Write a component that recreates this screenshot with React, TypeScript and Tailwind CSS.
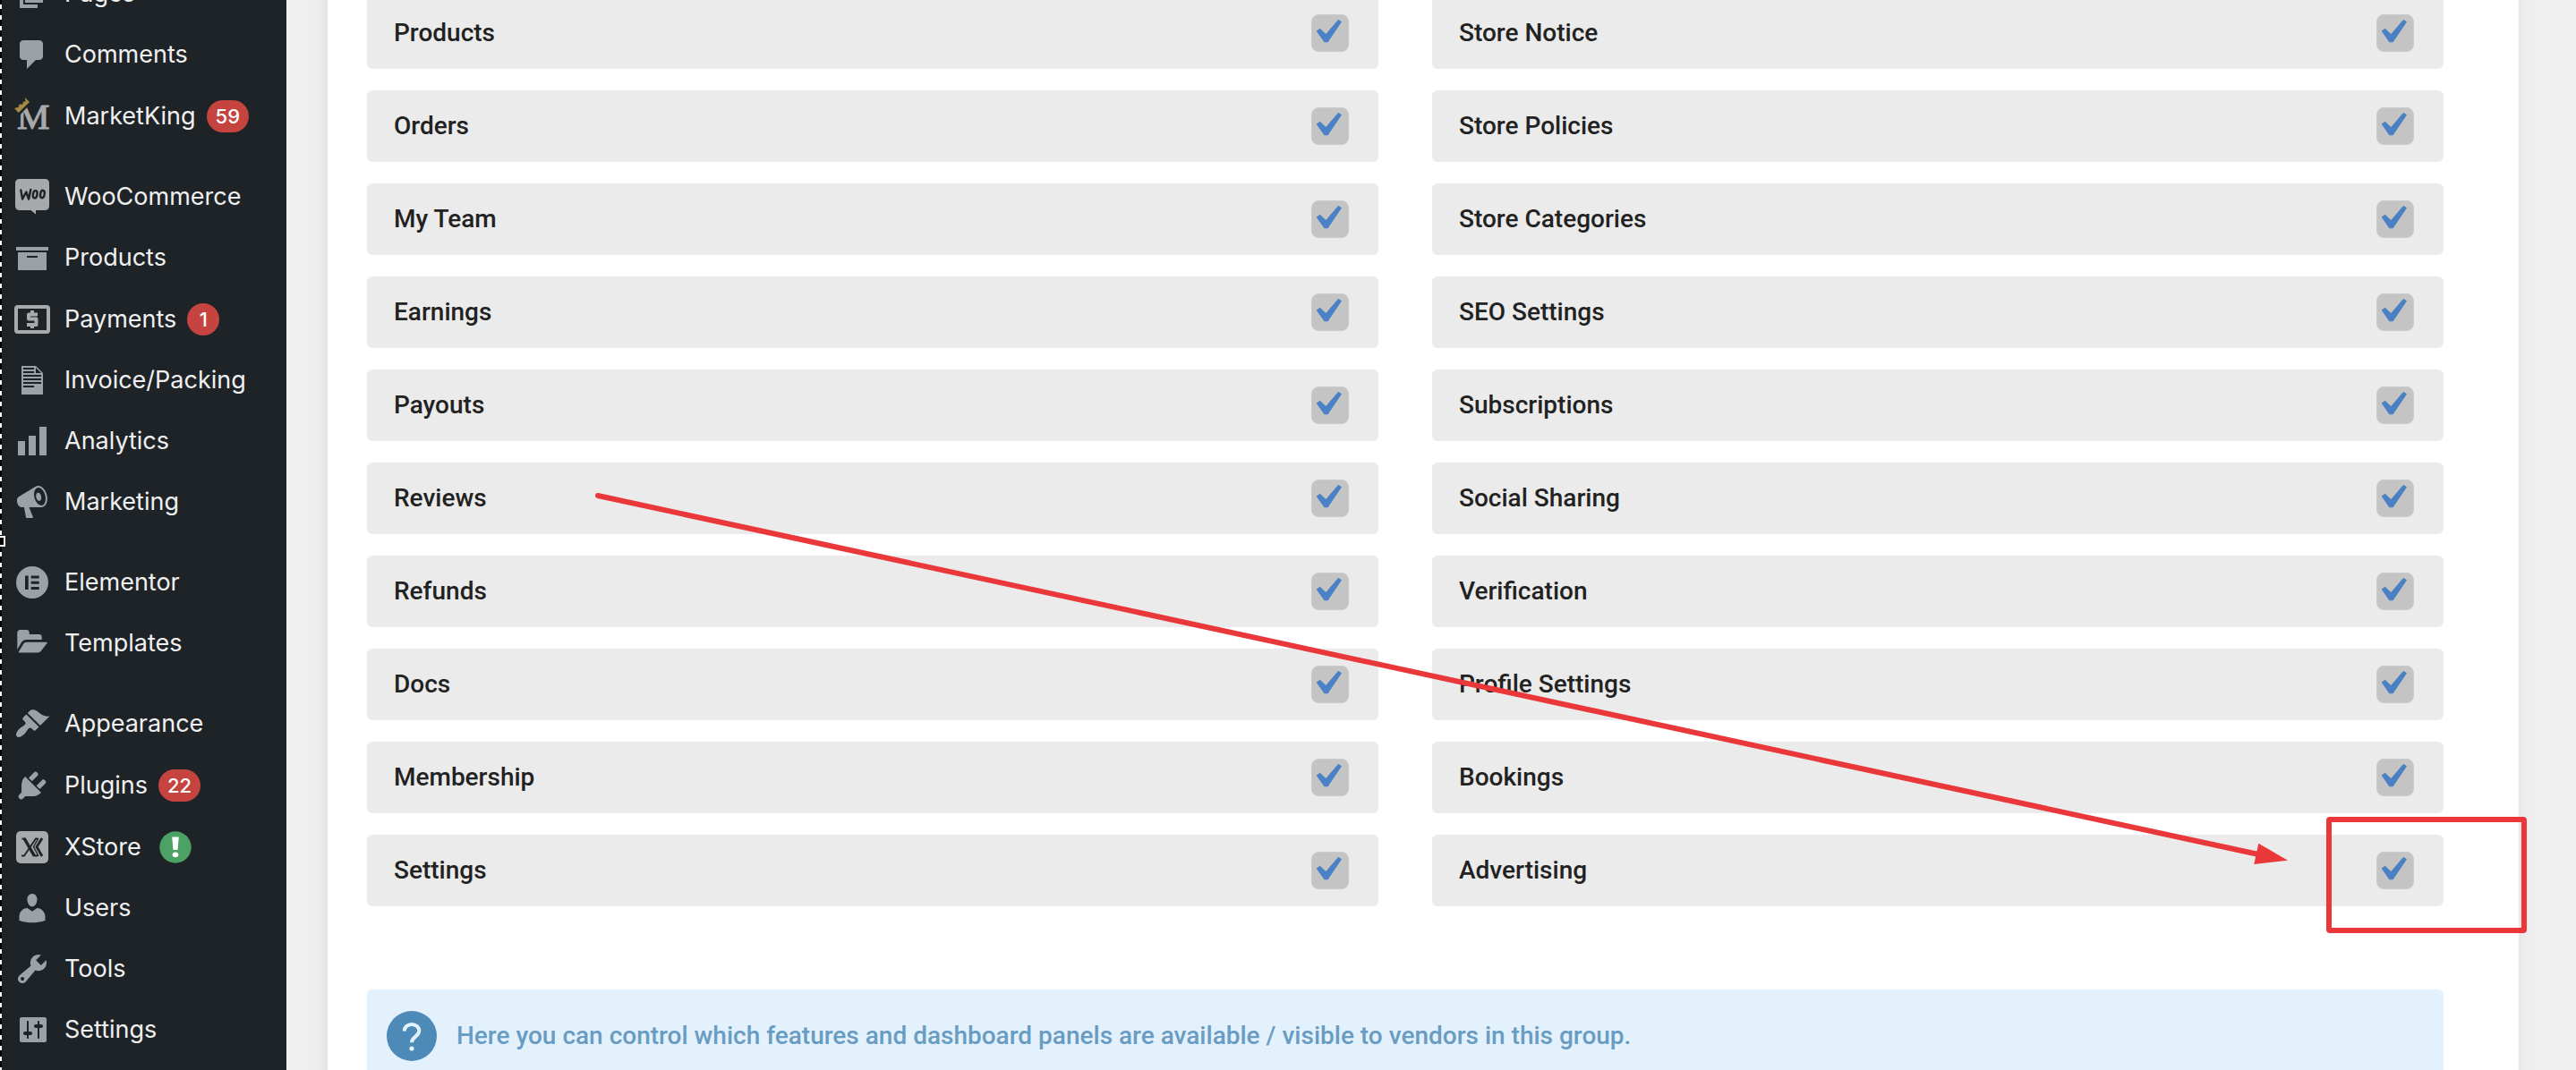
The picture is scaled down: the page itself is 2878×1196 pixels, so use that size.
import React, { useState } from "react";

interface MenuItem {
  label: string;
  icon: React.ReactNode;
  badge?: string;
  warning?: boolean;
}

// 20x20 glyphs, same grid as the admin menu icon font
const Dashicon = ({ d }: { d: string }) => (
  <svg viewBox="0 0 20 20" className="size-10 fill-[#9ca1a8]" aria-hidden="true">
    <path fillRule="evenodd" d={d} />
  </svg>
);

const MarketKingIcon = () => (
  <svg viewBox="0 0 40 40" className="size-10 overflow-visible" aria-hidden="true">
    <text x="3" y="34" fontSize="41" fontFamily="Liberation Serif, serif" fill="#a7aaad" stroke="#a7aaad" strokeWidth="1.2">
      M
    </text>
    <path d="M0 11L12-1l7 6L6 19z" fill="#1e2327" />
    <path d="M0 11l4.800-1.200.8-3.300 3.600.3 1-3.200 2.300.2L12-1l5 5L4.700 16z" fill="#a88b40" />
  </svg>
);

const WooIcon = () => (
  <svg viewBox="0 0 40 40" className="size-10" aria-hidden="true">
    <path d="M6 0h28q5 0 5 5v25q0 5-5 5H24v4.500L18.500 35H6q-5 0-5-5V5q0-5 5-5z" fill="#a7aaad" />
    <g fill="none" stroke="#1e2327" strokeWidth="2.400" strokeLinecap="round" strokeLinejoin="round">
      <path d="M7.300 12.500l1.800 10 4.200-8 2.800 8 2.200-10.500" />
      <ellipse cx="23.200" cy="17.300" rx="2.300" ry="4.200" transform="rotate(10 23.200 17.300)" />
      <ellipse cx="31.400" cy="17" rx="2.300" ry="4.200" transform="rotate(10 31.400 17)" />
    </g>
  </svg>
);

const PaymentsIcon = () => (
  <svg viewBox="0 0 40 40" className="size-10" fill="none" stroke="#a7aaad" aria-hidden="true">
    <rect x="2" y="6" width="36" height="28" rx="2" strokeWidth="4" />
    <path d="M26 14.500H16v5h8.500v6.500H14M20 10v4M20 26v4" strokeWidth="4" strokeLinejoin="round" />
  </svg>
);

const ElementorIcon = () => (
  <svg viewBox="0 0 40 40" className="size-10" aria-hidden="true">
    <circle cx="20" cy="20" r="18" fill="#9ca1a8" />
    <path d="M12 12.500h3.700V28H12zM18.700 12.500h9v3h-9zM18.700 18.700h9v3h-9zM18.700 25h9v3h-9z" fill="#1e2327" />
  </svg>
);

const TemplatesIcon = () => (
  <svg viewBox="0 0 40 40" className="size-10 fill-[#9ca1a8]" aria-hidden="true">
    <path d="M3.300 27V8.500Q3.300 5 6.800 5h6.700q3.200 0 3.200 3.200V10h10.800q3.200 0 3.200 3.200V16H13.500q-3 0-5 2.200z" />
    <path d="M13.500 18.700H36q1.400 0 .5 1.300l-6.500 8.500q-1.500 1.900-4 1.900H6q-2 0-.8-1.500l4.800-7.900q1.400-2.300 3.500-2.300z" />
  </svg>
);

const XStoreIcon = () => (
  <svg viewBox="0 0 40 40" className="size-10" aria-hidden="true">
    <rect x="2" y="2" width="36" height="36" rx="5" fill="#a7a9ab" />
    <g fill="none" stroke="#1e2327">
      <path d="M8.500 10.500h3l11.500 19h3" strokeWidth="2" />
      <path d="M11 10l11.500 20" strokeWidth="3.400" />
      <path d="M26 10.500h-2L11 29.500H8" strokeWidth="1.800" />
      <path d="M27 10l-5.500 9.500L27 30" strokeWidth="1.400" />
      <path d="M31 10l-6 9.500 6 10.500" strokeWidth="2.800" />
    </g>
  </svg>
);

const menuGroups: MenuItem[][] = [
  [
    { label: "Pages", icon: <Dashicon d="M6 15V2h10v13H6zm-1 1h8v2H3V5h2v11z" /> },
    {
      label: "Comments",
      icon: <Dashicon d="M5 2h9c1.100 0 2 .9 2 2v7c0 1.100-.9 2-2 2h-2l-5 5v-5H5c-1.100 0-2-.9-2-2V4c0-1.100.9-2 2-2z" />,
    },
    { label: "MarketKing", icon: <MarketKingIcon />, badge: "59" },
  ],
  [
    { label: "WooCommerce", icon: <WooIcon /> },
    { label: "Products", icon: <Dashicon d="M19 4v2H1V4h18zM2 7h16v10H2V7zm11 3V9H7v1h6z" /> },
    { label: "Payments", icon: <PaymentsIcon />, badge: "1" },
    {
      label: "Invoice/Packing",
      icon: <Dashicon d="M12 2l4 4v12H4V2h8zM5 3v1h6V3H5zm7 3h3l-3-3v3zM5 5v1h6V5H5zm10 3V7H5v1h10zM5 9v1h10V9H5zm10 3v-1H5v1h10zM5 13v1h6v-1H5z" />,
    },
    { label: "Analytics", icon: <Dashicon d="M18 18V2h-4v16h4zm-6 0V7H8v11h4zm-6 0v-8H2v8h4z" /> },
    {
      label: "Marketing",
      icon: (
        <Dashicon d="M18.150 5.940c.46 1.620.38 3.220-.02 4.480-.42 1.280-1.260 2.180-2.300 2.480-.16.06-.26.06-.4.06-.06.02-.12.02-.18.02-.06.02-.14.02-.22.02h-6.800l2.220 5.500c.02.14-.06.26-.14.34-.08.1-.24.16-.34.16H6.950c-.1 0-.26-.06-.34-.16-.08-.08-.16-.2-.14-.34l-1-5.500H4.250l-.02-.02c-.5.06-1.080-.18-1.540-.62s-.88-1.080-1.060-1.880c-.24-.8-.2-1.560-.02-2.200.18-.62.58-1.080 1.060-1.300l.02-.02 9-5.400c.1-.06.18-.1.24-.16.06-.04.14-.08.24-.12.16-.08.28-.12.5-.18 1.040-.3 2.240.1 3.220.98s1.840 2.240 2.260 3.860zm-2.580 5.980h-.02c.4-.1.74-.34 1.040-.7.58-.7.86-1.760.86-3.040 0-.64-.1-1.300-.28-1.980-.34-1.360-1.020-2.500-1.780-3.240s-1.680-1.100-2.460-.88c-.82.22-1.400.96-1.700 2-.32 1.040-.28 2.360.06 3.720.38 1.360 1 2.500 1.800 3.240.78.74 1.620 1.100 2.480.88zm-2.540-7.080c.22-.04.42-.02.62.04.38.16.76.48 1.020 1s.42 1.200.42 1.780c0 .3-.04.56-.12.8-.18.48-.44.84-.86.94-.34.1-.8-.06-1.140-.4s-.64-.86-.78-1.500c-.18-.62-.12-1.240.02-1.720s.48-.84.82-.94z" />
      ),
    },
  ],
  [
    { label: "Elementor", icon: <ElementorIcon /> },
    { label: "Templates", icon: <TemplatesIcon /> },
  ],
  [
    {
      label: "Appearance",
      icon: (
        <Dashicon d="M14.480 11.060L7.410 3.990l1.500-1.500c.5-.56 2.300-.47 3.510.32 1.210.8 1.430 1.280 2.910 2.100 1.180.64 2.450 1.260 4.450.85zm-.71.71L6.700 4.700 4.930 6.470c-.39.39-.39 1.020 0 1.410l1.060 1.060c.39.39.39 1.030 0 1.420-.6.6-1.430 1.110-2.210 1.690-.35.26-.7.53-1.010.84C1.430 14.230.4 16.080 1.400 17.070c.99 1 2.840-.03 4.180-1.360.31-.31.58-.66.85-1.020.57-.78 1.080-1.610 1.690-2.210.39-.39 1.020-.39 1.410 0l1.060 1.060c.39.39 1.020.39 1.410 0z" />
      ),
    },
    {
      label: "Plugins",
      icon: (
        <Dashicon d="M13.110 4.360L9.870 7.600 8 5.730l3.240-3.240c.35-.34 1.050-.2 1.560.32.52.51.66 1.210.31 1.550zm-8 1.770l.91-1.120 9.010 9.010-1.190.84c-.71.71-2.630 1.160-3.820 1.160H6.140L4.900 17.260c-.59.59-1.540.59-2.120 0-.59-.58-.59-1.530 0-2.120l1.240-1.240v-3.880c0-1.130.4-3.190 1.090-3.890zm7.260 3.970l3.240-3.240c.34-.35 1.040-.21 1.550.31.52.51.66 1.210.31 1.550l-3.240 3.250z" />
      ),
      badge: "22",
    },
    { label: "XStore", icon: <XStoreIcon />, warning: true },
    {
      label: "Users",
      icon: (
        <Dashicon d="M10 9.250c-2.270 0-2.730-3.440-2.730-3.440C7 4.020 7.820 2 9.970 2c2.160 0 2.980 2.020 2.710 3.810 0 0-.41 3.440-2.680 3.440zm0 2.570L12.720 10c2.390 0 4.520 2.330 4.520 4.530v2.490s-3.650 1.130-7.240 1.130c-3.650 0-7.240-1.130-7.240-1.130v-2.490c0-2.250 1.940-4.480 4.470-4.480z" />
      ),
    },
    {
      label: "Tools",
      icon: (
        <Dashicon d="M16.680 9.770c-1.340 1.340-3.300 1.670-4.950.99l-5.410 6.520c-.99.99-2.590.99-3.580 0s-.99-2.590 0-3.570l6.520-5.420c-.68-1.650-.35-3.610.99-4.950 1.280-1.280 3.120-1.620 4.720-1.060l-2.890 2.890 2.820 2.820 2.860-2.870c.53 1.580.18 3.390-1.080 4.650zM3.810 16.210c.4.39 1.040.39 1.430 0 .4-.4.4-1.040 0-1.430-.39-.4-1.030-.4-1.430 0-.39.39-.39 1.030 0 1.430z" />
      ),
    },
    {
      label: "Settings",
      icon: (
        <Dashicon d="M18 16V4c0-.55-.45-1-1-1H4c-.55 0-1 .45-1 1v12c0 .55.45 1 1 1h13c.55 0 1-.45 1-1zM8 11h1c.55 0 1 .45 1 1s-.45 1-1 1H8v1.500c0 .28-.22.5-.5.5s-.5-.22-.5-.5V13H6c-.55 0-1-.45-1-1s.45-1 1-1h1V5.500c0-.28.22-.5.5-.5s.5.22.5.5V11zm5-2h-1c-.55 0-1-.45-1-1s.45-1 1-1h1V5.500c0-.28.22-.5.5-.5s.5.22.5.5V7h1c.55 0 1 .45 1 1s-.45 1-1 1h-1v5.500c0 .28-.22.5-.5.5s-.5-.22-.5-.5V9z" />
      ),
    },
  ],
];

const panels = [
  "Products",
  "Orders",
  "My Team",
  "Earnings",
  "Payouts",
  "Reviews",
  "Refunds",
  "Docs",
  "Membership",
  "Settings",
  "Store Notice",
  "Store Policies",
  "Store Categories",
  "SEO Settings",
  "Subscriptions",
  "Social Sharing",
  "Verification",
  "Profile Settings",
  "Bookings",
  "Advertising",
];

const Sidebar = () => (
  <aside className="w-80 shrink-0 bg-[#1e2327] font-['Inter',sans-serif] text-[27px] leading-9 text-[#f0f0f1]">
    <nav className="-mt-[41px] flex flex-col gap-[22px]">
      {menuGroups.map((group, i) => (
        <ul key={i}>
          {group.map((item) => (
            <li key={item.label}>
              <a href="#" className="flex items-center py-4 pl-4">
                <span className="-my-1 w-10 shrink-0">{item.icon}</span>
                <span className="ml-4">{item.label}</span>
                {item.badge && (
                  <span className="mt-px ml-3 h-9 min-w-9 rounded-full bg-[#c5443f] px-2.5 text-center text-[22px] font-medium text-white">
                    {item.badge}
                  </span>
                )}
                {item.warning && (
                  <svg viewBox="0 0 36 36" className="mt-px ml-5 size-9" role="img" aria-label="Warning">
                    <circle cx="18" cy="18" r="17.700" fill="#4ca265" />
                    <path d="M14.200 6.500h7.600L20.500 21h-5z" fill="#fff" />
                    <ellipse cx="18" cy="26.300" rx="3.300" ry="2.900" fill="#fff" />
                  </svg>
                )}
              </a>
            </li>
          ))}
        </ul>
      ))}
    </nav>
  </aside>
);

const PanelRow = ({ label, id }: { label: string; id: string }) => {
  const [checked, setChecked] = useState(true);

  return (
    <div className="flex h-20 items-center justify-between rounded-md bg-[#ebebeb] pr-[33px] pl-[30px]">
      <label htmlFor={id}>{label}</label>
      <span className="relative size-[42px]">
        <input
          id={id}
          type="checkbox"
          checked={checked}
          onChange={(e) => setChecked(e.target.checked)}
          className="block size-[42px] appearance-none rounded-lg border border-[#cbcbcb] bg-[#c4c4c4]"
        />
        {checked && (
          <svg viewBox="0 0 42 42" className="pointer-events-none absolute inset-0" aria-hidden="true">
            <path d="M5.700 18.700l4-3 6.600 6.200L30.300 5.700l3.700 2.800L18.500 31.200h-4z" fill="#4a81c4" />
          </svg>
        )}
      </span>
    </div>
  );
};

// Red marker drawn over the page
const Annotation = () => (
  <svg className="pointer-events-none absolute inset-0 size-full" aria-hidden="true">
    <path d="M668 554L2521 954.500" stroke="#ea373a" strokeWidth="6" strokeLinecap="round" />
    <path d="M2523.300 942.700L2556 961.700 2518.300 966z" fill="#ea373a" />
    <rect x="2602" y="916" width="218" height="124" rx="1" fill="none" stroke="#ea373a" strokeWidth="6" strokeLinejoin="round" />
  </svg>
);

// Dashed edge of the selection with its resize handle
const SelectionEdge = () => (
  <>
    <div className="absolute inset-y-0 left-0 w-0.5 bg-[repeating-linear-gradient(to_bottom,#000_0px,#000_5px,#fff_5px,#fff_10px,#000_10px,#000_12px)]" />
    <div className="absolute top-[599px] left-0 h-3 w-1.5 border-2 border-l-0 border-white bg-black" />
  </>
);

const App: React.FC = () => {
  return (
    <div className="relative flex h-screen overflow-hidden bg-[#efefef]">
      <Sidebar />
      <main className="flex-1 pr-16 pl-[46px] font-['Roboto',sans-serif] text-[28px] leading-9 font-medium text-[#222]">
        <div className="-mt-6 bg-white pt-[21px] pr-[84px] pb-16 pl-11 shadow-[-2px_0_16px_rgba(0,0,0,0.08)]">
          <div className="grid grid-flow-col grid-cols-2 grid-rows-10 gap-x-[60px] gap-y-6">
            {panels.map((label, i) => (
              <PanelRow key={label} id={`panel-${i}`} label={label} />
            ))}
          </div>
          <div className="mt-[93px] flex items-center gap-[22px] rounded-md bg-[#e3f1fc] px-[22px] py-6 text-[#699cc2]">
            <svg viewBox="0 0 56 56" className="size-14 shrink-0" aria-hidden="true">
              <circle cx="28" cy="28" r="28" fill="#4d8ab8" />
              <path d="M19.800 22.500c0-4.500 3.700-7.500 8.200-7.500s8.300 3.200 8.300 7.300c0 6.200-8.300 6.500-8.300 13" fill="none" stroke="#e3f1fc" strokeWidth="4" />
              <circle cx="28" cy="42" r="2.600" fill="#e3f1fc" />
            </svg>
            <p>Here you can control which features and dashboard panels are available / visible to vendors in this group.</p>
          </div>
        </div>
      </main>
      <SelectionEdge />
      <Annotation />
    </div>
  );
};

export default App;
